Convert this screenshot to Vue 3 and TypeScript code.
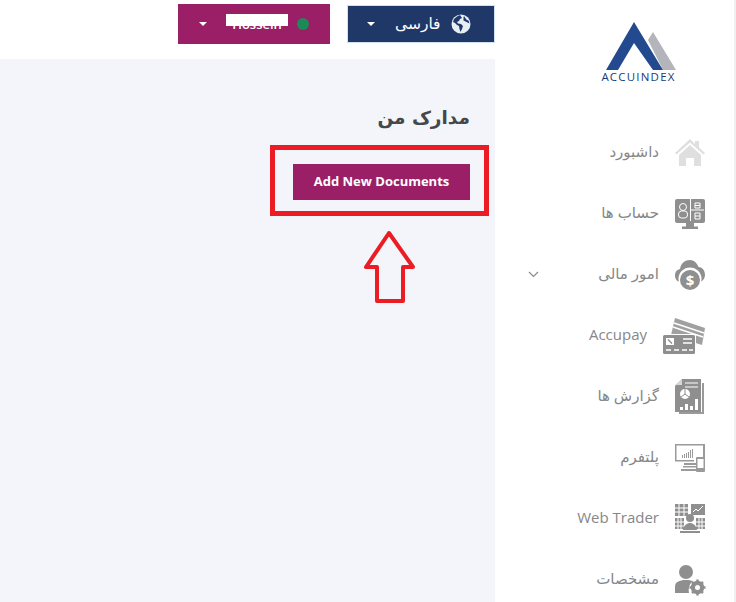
<script setup lang="ts">
interface NavItem {
  id: string;
  label: string;
  width: number;
  height: number;
  chevron?: boolean;
}

const items: NavItem[] = [
  { id: "home", label: "داشبورد", width: 30, height: 27 },
  { id: "accounts", label: "حساب ها", width: 30, height: 30 },
  { id: "finance", label: "امور مالی", width: 30, height: 30, chevron: true },
  { id: "pay", label: "Accupay", width: 42, height: 36 },
  { id: "reports", label: "گزارش ها", width: 30, height: 35 },
  { id: "platform", label: "پلتفرم", width: 30, height: 28 },
  { id: "trader", label: "Web Trader", width: 30, height: 29 },
  { id: "profile", label: "مشخصات", width: 30, height: 30 },
];
</script>

<template>
  <div class="page">
    <main class="main">
      <header class="topbar">
        <button class="user-btn" type="button">
          <span class="caret"></span>
          <span class="user-name">Hossein<i class="redact"></i></span>
          <span class="dot"></span>
        </button>
        <button class="lang-btn" type="button">
          <span class="caret"></span>
          <span class="lang-label">فارسی</span>
          <svg class="globe" width="20" height="20" viewBox="0 0 20 20">
            <circle cx="10" cy="10" r="9.5" fill="#e9edf4" />
            <path d="M9 1 6 2.5 3 5 2 8l2 1 2 2 2 1 .5 3 1 3 1.5-3 1-3-2-2-3-.5L6 8l2-1 1-2 2-1zM13 2l2 3 1 1 1.500 .5 1 3-2-1-2-1-2-1 0-3z" fill="#20396b" />
          </svg>
        </button>
      </header>

      <section class="content">
        <h1 class="title">مدارک من</h1>
        <div class="action">
          <button class="add-btn" type="button">Add New Documents</button>
          <span class="red-box"></span>
          <svg class="red-arrow" width="60" height="76" viewBox="0 0 60 76">
            <path d="M30 3 7 37H18V71H44V37H54Z" fill="none" stroke="#ec1c24" stroke-width="4" stroke-linejoin="round" />
          </svg>
        </div>
      </section>
    </main>

    <aside class="sidebar">
      <div class="logo">
        <svg width="72" height="49" viewBox="0 0 72 49">
          <path d="M50 10 45 18 60 48H73Z" fill="#b4b5ba" />
          <path d="M31 0 3 48H15L31 21 50 48H60Z" fill="#234a8f" />
        </svg>
        <span class="logo-text">ACCUINDEX</span>
      </div>

      <nav class="nav">
        <a v-for="item in items" :key="item.id" class="nav-row" href="#">
          <svg class="icon" :width="item.width" :height="item.height" :viewBox="`0 0 ${item.width} ${item.height}`">
            <g v-if="item.id === 'home'" fill="#dfdfdf">
              <path d="M15 0 0 14l1.500 1.500L15 3.500l13.500 12L30 14l-6-5.500V2h-4v3z" />
              <path d="M4 16 15 6l11 10v11h-7v-8h-8v8H4z" />
            </g>
            <g v-else-if="item.id === 'accounts'">
              <rect width="30" height="24" rx="2" fill="#8f8f8f" />
              <path d="M11 24h8v3.500h4V30H7v-2.500h4z" fill="#8f8f8f" />
              <path d="M15.500 0v22M16 11h13" stroke="#fff" fill="none" />
              <circle cx="8" cy="8" r="3.500" fill="none" stroke="#fff" />
              <rect x="3.500" y="12" width="9" height="7" rx="3" fill="none" stroke="#fff" />
              <path d="M20 4h5v5h-5zM20 6.500h5M20 14h5v6h-5zM20 17h5" fill="none" stroke="#fff" />
            </g>
            <g v-else-if="item.id === 'finance'">
              <path d="M5 22C1 21 0 18 0 15c0-3 2-5.500 5-6C6 3 10 0 15 0c4 0 7 3 8.500 7C27 7 30 10 30 15c0 3-2 6-5 7z" fill="#8f8f8f" />
              <circle cx="15" cy="19" r="11.500" fill="#fff" />
              <circle cx="15" cy="20" r="10" fill="#8f8f8f" />
              <text x="15" y="25.500" class="dollar">$</text>
            </g>
            <g v-else-if="item.id === 'pay'">
              <path d="M12 0 42 10 39 27 8 17z" fill="#a0a0a0" />
              <path d="M11 5 41 15M10 9l30 10" stroke="#fff" stroke-width="1.500" />
              <rect x="-1" y="16" width="34" height="21" rx="1.500" fill="#fff" />
              <rect y="17" width="32" height="19" rx="1.500" fill="#8f8f8f" />
              <rect x="3" y="20" width="8" height="7" fill="#fff" />
              <path d="M5 21.500 9 25.500" stroke="#8f8f8f" stroke-width="1.500" />
              <path d="M20 21h9M20 25h9M3 32h5M11 32h5M19 32h5M26 32h4" stroke="#fff" stroke-width="1.500" />
            </g>
            <g v-else-if="item.id === 'reports'">
              <path d="M27 4h2v31H4v-2h23z" fill="#9a9a9a" />
              <path d="M7 0h19v33H0V7z" fill="#8f8f8f" />
              <path d="M0 6h7V0z" fill="#d6d6d6" />
              <path d="M10 4h13M10 8h13" stroke="#fff" />
              <circle cx="10" cy="15" r="5" fill="#fff" />
              <path d="M10 15V10M10 15l-4 3M10 15l4 3" stroke="#8f8f8f" />
              <path d="M5 28h3v3H5zM10 25h3v6h-3zM15 27h3v4h-3zM20 20h3v11h-3z" fill="#fff" />
            </g>
            <g v-else-if="item.id === 'platform'" fill="#9a9a9a">
              <path d="M0 0h30v17H28V1.500H1.500V16H19v1.500H0z" />
              <path d="M7 11h1v3H7zM9 10h1v4H9zM11 9h1v5h-1zM13 8h1v6h-1zM15 6h1v8h-1zM17 5h1v9h-1z" />
              <path d="M9 19h12v2H9zM8 22h13v1.500H8zM6 25h15v2H6z" />
              <rect x="21" y="13" width="9" height="15" rx="1" />
              <rect x="22.500" y="15" width="6" height="9" fill="#fff" />
            </g>
            <g v-else-if="item.id === 'trader'" fill="#8f8f8f">
              <path d="M0 0h13v12H0zM16 0h14v11H16zM0 14h9v11H0zM21 14h9v11h-9z" />
              <path d="M4 0v12M9 0v12M0 4h13M0 8h13M3 14v11M6 14v11M0 18h9M0 22h9M24 14v11M27 14v11M21 18h9M21 22h9" stroke="#fff" fill="none" />
              <path d="m18 8 3-3 2 2 5-5" stroke="#fff" fill="none" />
              <circle cx="15" cy="14" r="4" />
              <path d="M8 26c1-5 4-7 7-7s6 2 7 7zM5 27h20v2H5z" />
            </g>
            <g v-else fill="#8f8f8f">
              <circle cx="11" cy="7" r="7" />
              <path d="M0 28v-6c0-5 4-7 11-7 3 0 5 .500 7 1-3 2-5 7-4 12z" />
              <circle cx="22.500" cy="22.500" r="5" fill="none" stroke="#8f8f8f" stroke-width="3.500" />
              <path d="M22.500 14.500v16M14.500 22.500h16M17 17l11 11M28 17 17 28" stroke="#8f8f8f" stroke-width="2.500" />
              <circle cx="22.500" cy="22.500" r="2.500" fill="#fff" />
            </g>
          </svg>
          <span class="nav-label">{{ item.label }}</span>
          <svg v-if="item.chevron" class="chevron" width="11" height="7" viewBox="0 0 11 7">
            <path d="m1 1 4.500 4.500L10 1" fill="none" stroke="#8b8b8b" stroke-width="1.200" />
          </svg>
        </a>
      </nav>
    </aside>
  </div>
</template>

<style>
html,
body {
  margin: 0;
  overflow: hidden;
  background: #fff;
}
</style>

<style scoped>
.page {
  display: flex;
  width: 736px;
  height: 602px;
  overflow: hidden;
  font-family: "Open Sans", "DejaVu Sans", sans-serif;
}

.main {
  width: 495px;
  flex: none;
  display: flex;
  flex-direction: column;
  background: #f3f5fa;
}

.topbar {
  height: 59px;
  flex: none;
  box-sizing: border-box;
  padding-top: 4px;
  background: #fff;
  display: flex;
  justify-content: flex-end;
  align-items: flex-start;
  gap: 17px;
}

.user-btn,
.lang-btn {
  display: flex;
  align-items: center;
  border: 0;
  color: #fff;
  font-family: inherit;
  padding: 0;
}

.user-btn {
  width: 152px;
  height: 40px;
  background: #9b1f66;
  padding-left: 21px;
}

.lang-btn {
  width: 148px;
  height: 38px;
  margin-top: 1px;
  background: #1f3868;
  border: 1px solid #cfe0f2;
  box-sizing: border-box;
  padding-left: 19px;
}

.caret {
  width: 0;
  height: 0;
  border-left: 4px solid transparent;
  border-right: 4px solid transparent;
  border-top: 4px solid #fff;
}

.user-name {
  position: relative;
  margin-left: 19px;
  width: 62px;
  font-size: 13px;
  font-weight: 600;
  line-height: 14px;
}

.redact {
  position: absolute;
  left: 0;
  top: -3px;
  width: 62px;
  height: 12px;
  background: #fff;
}

.dot {
  width: 12px;
  height: 12px;
  margin-left: 9px;
  border-radius: 50%;
  background: #1c8a57;
}

.lang-label {
  margin-left: 20px;
  font-family: "DejaVu Sans", sans-serif;
  font-size: 15.500px;
  font-weight: 400;
  direction: rtl;
}

.globe {
  margin-left: 10px;
}

.content {
  display: flex;
  flex-direction: column;
  align-items: flex-end;
  padding: 46px 25px 0 0;
}

.title {
  margin: 0;
  direction: rtl;
  font-family: "DejaVu Sans", sans-serif;
  font-size: 18.500px;
  font-weight: 700;
  line-height: 26px;
  color: #45474b;
}

.action {
  position: relative;
  margin-top: 33px;
}

.add-btn {
  display: block;
  width: 177px;
  height: 36px;
  border: 0;
  padding: 0 0 2px;
  background: #9b1f66;
  color: #fff;
  font-family: "Open Sans", sans-serif;
  font-size: 13px;
  font-weight: 700;
}

.red-box {
  position: absolute;
  left: -23px;
  top: -19px;
  width: 219px;
  height: 71px;
  box-sizing: border-box;
  border: 5px solid #ec1c24;
}

.red-arrow {
  position: absolute;
  left: 66px;
  top: 66px;
}

.sidebar {
  flex: 1;
  background: #fff;
  border-right: 2px solid #eef0f4;
}

.logo {
  height: 122px;
  box-sizing: border-box;
  padding-top: 22px;
  width: 81px;
  margin-left: 103px;
  display: flex;
  flex-direction: column;
  align-items: center;
}

.logo svg {
  display: block;
  margin-left: 0;
  overflow: visible;
}

.logo-text {
  margin-top: 0;
  font-family: "Open Sans", sans-serif;
  font-size: 11.500px;
  font-weight: 500;
  line-height: 12px;
  letter-spacing: 1.200px;
  color: #213a72;
  white-space: nowrap;
}

.nav {
  display: flex;
  flex-direction: column;
}

.nav-row {
  height: 61px;
  box-sizing: border-box;
  display: flex;
  flex-direction: row-reverse;
  align-items: center;
  justify-content: flex-start;
  gap: 16px;
  padding: 0 29px 0 33px;
  color: #85878a;
  text-decoration: none;
}

.icon {
  flex: none;
  display: block;
  overflow: visible;
}

.nav-label {
  direction: rtl;
  margin-bottom: 3px;
  font-family: "Open Sans", "DejaVu Sans", sans-serif;
  font-size: 15px;
  white-space: nowrap;
}

.chevron {
  margin-right: auto;
}

.dollar {
  font-family: "Open Sans", sans-serif;
  font-size: 15px;
  font-weight: 700;
  text-anchor: middle;
  fill: #fff;
}
</style>
